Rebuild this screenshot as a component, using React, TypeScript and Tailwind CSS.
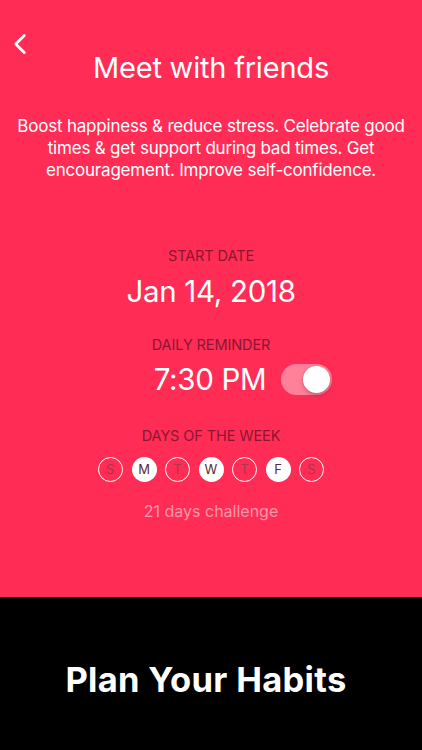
import { ChevronLeft } from "lucide-react";

const days = [
  { d: "S", on: false },
  { d: "M", on: true },
  { d: "T", on: false },
  { d: "W", on: true },
  { d: "T", on: false },
  { d: "F", on: true },
  { d: "S", on: false },
];

export default function App() {
  return (
    <div className="w-[422px] h-[750px] flex flex-col overflow-hidden font-['Inter',sans-serif]">
      {/* Pink panel */}
      <div className="h-[597px] bg-[#ff2d55] text-white flex flex-col items-center">
        <div className="w-full h-[38px] pt-[27px] pl-[3px]">
          <ChevronLeft size={34} strokeWidth={2} />
        </div>
        <h1 className="text-[29px] leading-[34px] font-normal mt-[13px] tracking-[-0.2px]">Meet with friends</h1>
        <p className="mt-[30px] px-[12px] text-center text-[17px] leading-[22px] tracking-[-0.2px]">
          Boost happiness &amp; reduce stress. Celebrate good times &amp; get support during bad times. Get encouragement. Improve self-confidence.
        </p>

        <div className="mt-[66px] text-[14.5px] leading-[18px] text-[#8c1530] tracking-[-0.1px]">START DATE</div>
        <div className="mt-[9px] text-[29.5px] leading-[34px] tracking-[-0.3px]">Jan 14, 2018</div>

        <div className="mt-[28px] text-[14.5px] leading-[18px] text-[#8c1530] tracking-[-0.1px]">DAILY REMINDER</div>
        <div className="mt-[8px] flex items-center gap-[15px] pl-[64px]">
          <span className="text-[29.5px] leading-[34px] tracking-[-0.3px]">7:30 PM</span>
          <div className="w-[51px] h-[31px] rounded-full bg-[#ff8099] relative">
            <div className="absolute right-[2px] top-[2px] w-[27px] h-[27px] rounded-full bg-white shadow-[0_2px_4px_rgba(0,0,0,0.25)]" />
          </div>
        </div>

        <div className="mt-[31px] text-[14.5px] leading-[18px] text-[#8c1530] tracking-[-0.1px]">DAYS OF THE WEEK</div>
        <div className="mt-[12px] flex gap-[8.5px]">
          {days.map((x, i) => (
            <div
              key={i}
              className={`w-[25px] h-[25px] rounded-full flex items-center justify-center text-[13px] ${
                x.on ? "bg-white text-[#5a2a35]" : "border border-white text-[#b0324f]"
              }`}
            >
              {x.d}
            </div>
          ))}
        </div>

        <div className="mt-[19px] text-[16px] leading-[20px] text-white/50">21 days challenge</div>
      </div>

      {/* Black footer */}
      <div className="flex-1 bg-black flex items-center justify-center pt-[12px] pr-[10px]">
        <span className="text-white text-[34.5px] font-bold tracking-[0.3px]">Plan Your Habits</span>
      </div>
    </div>
  );
}
